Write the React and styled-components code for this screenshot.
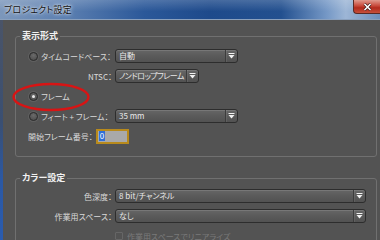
import styled, { createGlobalStyle } from 'styled-components'

const GlobalStyle = createGlobalStyle`
 html, body {
  margin: 0;
  padding: 0;
  background: #535353;
 }
 body {
  width: 380px;
  height: 240px;
  overflow: hidden;
  font-family: 'Noto Sans CJK JP', 'Noto Sans', sans-serif;
  font-feature-settings: 'palt';
 }
`

const Window = styled.div`
 width: 380px;
 height: 240px;
 display: flex;
 flex-direction: column;
 overflow: hidden;
 position: relative;
`

const TitleBar = styled.div`
 height: 20px;
 flex-shrink: 0;
 display: flex;
 align-items: center;
 justify-content: space-between;
 padding-left: 4px;
 box-sizing: border-box;
 border-bottom: 1px solid #8aa0bd;
 background:
  linear-gradient(180deg, rgba(255, 255, 255, 0.18) 0%, rgba(255, 255, 255, 0) 60%),
  linear-gradient(90deg, #7c97bb 0%, #5a7eb0 18%, #2b5899 38%, #1e4a8b 55%, #23508f 74%, #7598c6 86%, #9db6d6 91%, #6d8ebb 100%);
`

const Title = styled.span`
 font-size: 9px;
 color: #111;
 letter-spacing: 0.2px;
 text-shadow: 0 0 4px rgba(255, 255, 255, 0.9), 0 0 2px rgba(255, 255, 255, 0.8);
`

const CloseButton = styled.div`
 align-self: flex-start;
 width: 26px;
 height: 13px;
 border-bottom-left-radius: 4px;
 border: 1px solid #5a2a26;
 border-top: none;
 border-right: none;
 background: linear-gradient(180deg, #e09a8e 0%, #c8493a 45%, #b22a1c 60%, #c6503c 100%);
 display: flex;
 align-items: center;
 justify-content: center;
`

const Body = styled.div`
 flex: 1;
 display: flex;
`

const SideFrame = styled.div`
 width: 3px;
 flex-shrink: 0;
 background: linear-gradient(180deg, #4a5468 0%, #3a4f72 45%, #2b58a3 70%, #2a5cb0 100%);
`

const Content = styled.div`
 flex: 1;
 padding: 10px 3px 0 12px;
 display: flex;
 flex-direction: column;
 gap: 15px;
`

const Group = styled.fieldset`
 margin: 0;
 padding: ${(p) => p.$pad};
 border: 1px solid #707070;
 border-radius: 3px;
 min-width: 0;
`

const Legend = styled.legend`
 margin-left: 4px;
 padding: 0 2px;
 font-size: 9px;
 line-height: 12px;
 font-weight: bold;
 color: #f2f2f2;
`

const Row = styled.div`
 height: 20px;
 display: grid;
 grid-template-columns: 96px auto;
 column-gap: 3px;
 align-items: center;
`

const LabelCell = styled.div`
 display: flex;
 align-items: center;
 justify-content: ${(p) => (p.$left ? 'flex-start' : 'flex-end')};
 padding-left: ${(p) => (p.$left ? '13px' : '0')};
 font-size: 8px;
 color: #dadada;
 white-space: nowrap;
`

const Radio = styled.span`
 width: 7px;
 height: 7px;
 border-radius: 50%;
 border: 1px solid #2c2c2c;
 background: radial-gradient(circle at 50% 35%, #6a6a6a, #4a4a4a);
 box-shadow: 0 0 0 1px rgba(255, 255, 255, 0.08);
 margin-right: 3px;
 display: flex;
 align-items: center;
 justify-content: center;
 flex-shrink: 0;
 &::after {
  content: '';
  width: 3px;
  height: 3px;
  border-radius: 50%;
  background: ${(p) => (p.$checked ? '#e8e8e8' : 'transparent')};
 }
`

const Select = styled.div`
 width: ${(p) => p.$w}px;
 height: 14px;
 box-sizing: border-box;
 display: flex;
 align-items: stretch;
 border: 1px solid #2d2d2d;
 border-radius: 3px;
 background: linear-gradient(180deg, #666 0%, #5a5a5a 50%, #525252 100%);
 box-shadow: inset 0 1px 0 rgba(255, 255, 255, 0.12);
`

const SelectText = styled.span`
 flex: 1;
 min-width: 0;
 padding-left: 3px;
 font-size: 8px;
 line-height: 12px;
 letter-spacing: ${(p) => (p.$tight ? '-0.5px' : '0')};
 color: #e8e8e8;
 white-space: nowrap;
`

const ArrowBox = styled.span`
 width: 11px;
 flex-shrink: 0;
 border-left: 1px solid #3c3c3c;
 box-shadow: inset 1px 0 0 rgba(255, 255, 255, 0.08);
 display: flex;
 align-items: center;
 justify-content: center;
`

const StartRow = styled.div`
 height: 20px;
 display: flex;
 align-items: center;
 padding-left: 12px;
 font-size: 8px;
 color: #dadada;
`

const NumberInput = styled.div`
 margin-left: 3px;
 width: 33px;
 height: 15px;
 box-sizing: border-box;
 border: 2px solid #b88a1c;
 background: #a9a9a9;
 display: flex;
 align-items: center;
 padding-left: 1px;
`

const Selected = styled.span`
 background: #2f6fd6;
 color: #fff;
 font-size: 8px;
 line-height: 10px;
 padding: 0 1px;
`

const CheckRow = styled.div`
 height: 20px;
 display: flex;
 align-items: center;
 padding-left: 99px;
 font-size: 8px;
 color: #7a7a7a;
`

const CheckBox = styled.span`
 width: 6px;
 height: 6px;
 border: 1px solid #666;
 border-radius: 1px;
 margin-right: 4px;
`

const Annotation = styled.svg`
 position: absolute;
 left: 12px;
 top: 82px;
`

function Arrow() {
 return (
  <svg width='7' height='6' viewBox='0 0 7 6'>
   <rect x='0.5' y='0' width='6' height='1' fill='#f0f0f0' />
   <path d='M0.5 2 L6.5 2 L3.5 5.5 Z' fill='#f0f0f0' />
  </svg>
 )
}

function Dropdown({ width, tight, children }) {
 return (
  <Select $w={width}>
   <SelectText $tight={tight}>{children}</SelectText>
   <ArrowBox>
    <Arrow />
   </ArrowBox>
  </Select>
 )
}

export default function App() {
 return (
  <>
   <GlobalStyle />
   <Window>
    <TitleBar>
     <Title>プロジェクト設定</Title>
     <CloseButton>
      <svg width='9' height='8' viewBox='0 0 9 8'>
       <path d='M1.5 1 L7.5 7 M7.5 1 L1.5 7' stroke='#3a1a18' strokeWidth='3' />
       <path d='M1.5 1 L7.5 7 M7.5 1 L1.5 7' stroke='#fff' strokeWidth='1.6' />
      </svg>
     </CloseButton>
    </TitleBar>
    <Body>
     <SideFrame />
     <Content>
      <Group $pad='4px 0 10px 0'>
       <Legend>表示形式</Legend>
       <Row>
        <LabelCell $left>
         <Radio />
         タイムコードベース：
        </LabelCell>
        <Dropdown width={123}>自動</Dropdown>
       </Row>
       <Row>
        <LabelCell>NTSC：</LabelCell>
        <Dropdown width={84} tight>
         ノンドロップフレーム
        </Dropdown>
       </Row>
       <Row>
        <LabelCell $left>
         <Radio $checked />
         フレーム
        </LabelCell>
       </Row>
       <Row>
        <LabelCell $left>
         <Radio />
         フィート + フレーム：
        </LabelCell>
        <Dropdown width={123}>35 mm</Dropdown>
       </Row>
       <StartRow>
        開始フレーム番号：
        <NumberInput>
         <Selected>0</Selected>
        </NumberInput>
       </StartRow>
      </Group>
      <Group $pad='2px 0 0 0'>
       <Legend>カラー設定</Legend>
       <Row>
        <LabelCell>色深度：</LabelCell>
        <Dropdown width={251}>8 bit/チャンネル</Dropdown>
       </Row>
       <Row>
        <LabelCell>作業用スペース：</LabelCell>
        <Dropdown width={251}>なし</Dropdown>
       </Row>
       <CheckRow>
        <CheckBox />
        作業用スペースでリニアライズ
       </CheckRow>
      </Group>
     </Content>
    </Body>
    <Annotation width='84' height='32' viewBox='0 0 84 32'>
     <ellipse cx='39' cy='15' rx='37.5' ry='13' fill='none' stroke='#d81414' strokeWidth='2.4' />
    </Annotation>
   </Window>
  </>
 )
}
